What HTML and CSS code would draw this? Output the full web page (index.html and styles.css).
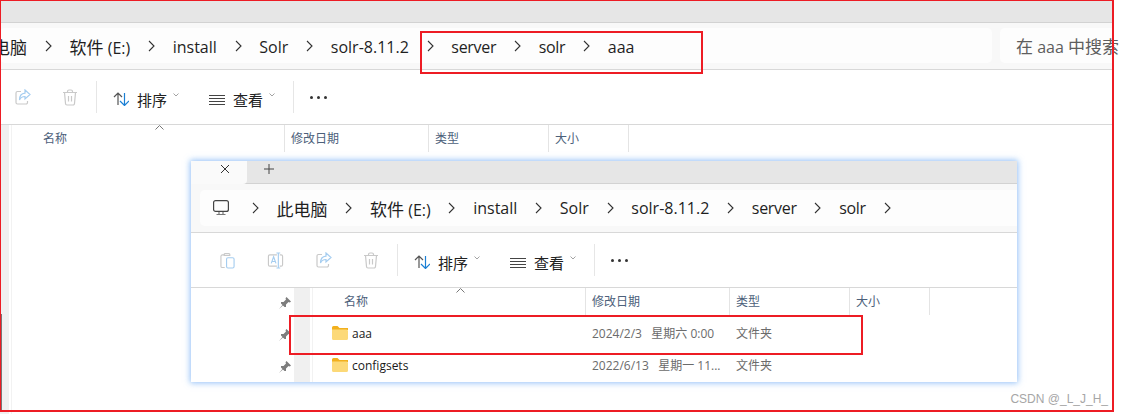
FILE: index.html
```html
<!DOCTYPE html>
<html lang="zh-CN">
<head>
    <meta charset="UTF-8">
    <link rel="stylesheet" href="styles.css">
    <title>aaa</title>
</head>
<body>
  <svg class="sprite" width="0" height="0">
    <symbol id="chev" viewBox="0 0 7 12"><path d="M1 1l5 5-5 5" fill="none" stroke="#333" stroke-width="1.1"/></symbol>
    <symbol id="clip" viewBox="0 0 16 18"><path d="M5 3H2.500A1.500 1.500 0 0 0 1 4.500V15a1.500 1.500 0 0 0 1.500 1.500H5" fill="none" stroke="#c9c9c9" stroke-width="1.2"/><path d="M4.500 3.500V2.500a1 1 0 0 1 1-1h4a1 1 0 0 1 1 1v1z" fill="none" stroke="#c9c9c9" stroke-width="1.200"/><rect x="7" y="6" width="8" height="11" rx="1.500" fill="none" stroke="#a5cdf0" stroke-width="1.200"/></symbol>
    <symbol id="trans" viewBox="0 0 17 18"><path d="M10 3H2.500A1.500 1.500 0 0 0 1 4.500v9A1.500 1.500 0 0 0 2.500 15H10M13 3h1.500A1.500 1.500 0 0 1 16 4.500v9a1.500 1.500 0 0 1-1.500 1.500H13" fill="none" stroke="#c9c9c9" stroke-width="1.200"/><path d="M4 12l2.500-7 2.500 7M5 10h3" fill="none" stroke="#a5cdf0" stroke-width="1.200"/><path d="M9.500 1h4M9.500 17h4M11.500 1v16" fill="none" stroke="#a5cdf0" stroke-width="1.200"/></symbol>
    <symbol id="share" viewBox="0 0 16 16"><path d="M6 2.500H2.500A1.500 1.500 0 0 0 1 4v9.500A1.500 1.500 0 0 0 2.500 15H11a1.500 1.500 0 0 0 1.500-1.500V12" fill="none" stroke="#c9c9c9" stroke-width="1.200"/><path d="M10 1l5 4.500L10 10V7.500C7.500 7.500 5.500 8.500 4.500 11c0-4 2-6.500 5.500-6.800z" fill="none" stroke="#a5cdf0" stroke-width="1.200"/></symbol>
    <symbol id="trash" viewBox="0 0 16 17"><path d="M1 3.500h14M5.500 3.500V2.500a1.500 1.500 0 0 1 1.500-1.500h2a1.500 1.500 0 0 1 1.500 1.500v1M2.500 3.500l1 11a1.500 1.500 0 0 0 1.500 1.500h6a1.500 1.500 0 0 0 1.500-1.500l1-11M6.500 7v5.500M9.500 7v5.500" fill="none" stroke="#c9c9c9" stroke-width="1.200"/></symbol>
    <symbol id="sort" viewBox="0 0 16 14"><path d="M1 5l4-4 4 4M5 1v12" fill="none" stroke="#555" stroke-width="1.200"/><path d="M7 9l4.500 4.500L16 9M11.500 13V1" fill="none" stroke="#1a7fd4" stroke-width="1.200"/></symbol>
    <symbol id="lines" viewBox="0 0 16 10"><path d="M0 .5h16M0 3.500h16M0 6.500h16M0 9.500h16" stroke="#444" stroke-width="1"/></symbol>
    <symbol id="caret" viewBox="0 0 6 4"><path d="M.5.500L3 3 5.500.500" fill="none" stroke="#999" stroke-width=".9"/></symbol>
    <symbol id="up" viewBox="0 0 9 5"><path d="M.5 4.500L4.500.500l4 4" fill="none" stroke="#777" stroke-width="1"/></symbol>
    <symbol id="folder" viewBox="0 0 16 14"><path d="M0 1.500A1.500 1.500 0 0 1 1.500 0h4l2 2H16v2H0z" fill="#f2b01e"/><path d="M0 3.500h14.500A1.500 1.500 0 0 1 16 5v7.500a1.500 1.500 0 0 1-1.500 1.500h-13A1.500 1.500 0 0 1 0 12.500z" fill="#fcd978"/></symbol>
    <symbol id="pin" viewBox="0 0 12 12"><path d="M7.500 0L12 4.500 10.800 5.500 9.500 5 7 7.500 7 10 5.500 10 2 6.500 2 5 4.500 5 7 2.500 6.500 1.200zM3.500 8L0 12l4-3.500z" fill="#7d7d7d"/></symbol>
  </svg>

  <!-- back window -->
  <div class="win back">
    <div class="tabs"></div>
    <div class="band">
      <div class="addr clip">
        <span class="crumb"><span class="zh">此电脑</span></span>
        <svg class="chev"><use href="#chev"/></svg>
        <span class="crumb"><span class="zh">软件</span> (E:)</span>
        <svg class="chev"><use href="#chev"/></svg>
        <span class="crumb">install</span>
        <svg class="chev"><use href="#chev"/></svg>
        <span class="crumb">Solr</span>
        <svg class="chev"><use href="#chev"/></svg>
        <span class="crumb">solr-8.11.2</span>
        <svg class="chev"><use href="#chev"/></svg>
        <span class="crumb tight">server</span>
        <svg class="chev"><use href="#chev"/></svg>
        <span class="crumb tight">solr</span>
        <svg class="chev"><use href="#chev"/></svg>
        <span class="crumb">aaa</span>
      </div>
      <div class="search"><span class="zh">在</span> aaa <span class="zh">中搜索</span></div>
    </div>
    <div class="tools">
      <svg class="ic i-share"><use href="#share"/></svg>
      <svg class="ic i-trash"><use href="#trash"/></svg>
      <div class="sep"></div>
      <svg class="i-sort"><use href="#sort"/></svg>
      <span class="tool-txt">排序</span>
      <svg class="caret"><use href="#caret"/></svg>
      <svg class="i-lines"><use href="#lines"/></svg>
      <span class="tool-txt">查看</span>
      <svg class="caret"><use href="#caret"/></svg>
      <div class="sep sep2"></div>
      <div class="dots"><i></i><i></i><i></i></div>
    </div>
    <div class="main">
      <div class="strip"></div>
      <div class="list">
        <div class="cols">
          <svg class="up"><use href="#up"/></svg>
          <div class="col c-name">名称</div>
          <div class="col c-date">修改日期</div>
          <div class="col c-type">类型</div>
          <div class="col c-size">大小</div>
        </div>
      </div>
    </div>
  </div>

  <!-- front window -->
  <div class="win front">
    <div class="tabs">
      <div class="tab">
        <svg class="x" width="10" height="10" viewBox="0 0 10 10"><path d="M1 1l8 8M9 1l-8 8" stroke="#333" stroke-width="1"/></svg>
      </div>
      <svg class="plus" width="10" height="10" viewBox="0 0 10 10"><path d="M5 0v10M0 5h10" stroke="#444" stroke-width="1"/></svg>
    </div>
    <div class="band">
      <div class="addr">
        <svg class="pc" width="16" height="16" viewBox="0 0 16 16"><rect x=".6" y=".6" width="14.800" height="10.800" rx="2" fill="none" stroke="#444" stroke-width="1.200"/><path d="M3.500 14.500h9M6 12v2.500M10 12v2.500" stroke="#777" stroke-width="1.200"/></svg>
        <svg class="chev"><use href="#chev"/></svg>
        <span class="crumb"><span class="zh">此电脑</span></span>
        <svg class="chev"><use href="#chev"/></svg>
        <span class="crumb"><span class="zh">软件</span> (E:)</span>
        <svg class="chev"><use href="#chev"/></svg>
        <span class="crumb">install</span>
        <svg class="chev"><use href="#chev"/></svg>
        <span class="crumb">Solr</span>
        <svg class="chev"><use href="#chev"/></svg>
        <span class="crumb">solr-8.11.2</span>
        <svg class="chev"><use href="#chev"/></svg>
        <span class="crumb tight">server</span>
        <svg class="chev"><use href="#chev"/></svg>
        <span class="crumb tight">solr</span>
        <svg class="chev"><use href="#chev"/></svg>
      </div>
    </div>
    <div class="tools">
      <svg class="ic i-clip"><use href="#clip"/></svg>
      <svg class="ic i-trans"><use href="#trans"/></svg>
      <svg class="ic i-share"><use href="#share"/></svg>
      <svg class="ic i-trash"><use href="#trash"/></svg>
      <div class="sep"></div>
      <svg class="i-sort"><use href="#sort"/></svg>
      <span class="tool-txt">排序</span>
      <svg class="caret"><use href="#caret"/></svg>
      <svg class="i-lines"><use href="#lines"/></svg>
      <span class="tool-txt">查看</span>
      <svg class="caret"><use href="#caret"/></svg>
      <div class="sep sep2"></div>
      <div class="dots"><i></i><i></i><i></i></div>
    </div>
    <div class="main">
      <div class="pins">
        <svg class="pin"><use href="#pin"/></svg>
        <svg class="pin"><use href="#pin"/></svg>
        <svg class="pin"><use href="#pin"/></svg>
      </div>
      <div class="strip"></div>
      <div class="list">
        <div class="cols">
          <svg class="up"><use href="#up"/></svg>
          <div class="col c-name">名称</div>
          <div class="col c-date">修改日期</div>
          <div class="col c-type">类型</div>
          <div class="col c-size">大小</div>
        </div>
        <div class="rows">
          <div class="row">
            <div class="r-name"><svg class="folder"><use href="#folder"/></svg>aaa</div>
            <div class="r-date">2024/2/3&nbsp;&nbsp;&nbsp;星期六 0:00</div>
            <div class="r-type">文件夹</div>
          </div>
          <div class="row">
            <div class="r-name"><svg class="folder"><use href="#folder"/></svg>configsets</div>
            <div class="r-date">2022/6/13&nbsp;&nbsp;&nbsp;星期一 11...</div>
            <div class="r-type">文件夹</div>
          </div>
        </div>
      </div>
    </div>
  </div>

  <!-- red marks drawn on top -->
  <div class="mark m-frame"></div>
  <div class="mark m-path"></div>
  <div class="mark m-row"></div>
  <div class="edge"></div>
  <div class="wm">CSDN @_L_J_H_</div>
</body>
</html>
```

FILE: styles.css
```css
html, body {
  margin: 0;
  height: 414px;
  overflow: hidden;
  background: #fff;
  font-family: "Open Sans", "Noto Sans CJK SC", sans-serif;
  color: #1f1f1f;
}
.sprite {
  position: absolute;
}
.zh {
  font-size: 17px;
}
.win {
  display: flex;
  flex-direction: column;
  background: #fff;
}
.back {
  width: 1113px;
  height: 414px;
}
.front {
  position: absolute;
  left: 191px;
  top: 161px;
  width: 826px;
  height: 221px;
  overflow: hidden;
  box-shadow: 0 0 6px 1px rgba(90, 160, 245, .65);
}

/* tab strip */
.tabs {
  display: flex;
  align-items: center;
  height: 22px;
  background: #e6e6e6;
  border-bottom: 1px solid #d2d2d2;
  flex: none;
}
.tab {
  display: flex;
  align-items: center;
  height: 23px;
  width: 56px;
  background: #fafafa;
  border-bottom-right-radius: 4px;
  margin-bottom: -1px;
  box-sizing: border-box;
  padding-left: 29px;
}
.x {
  margin-top: -8px;
}
.plus {
  margin-left: 17px;
  margin-top: -6px;
}

/* address */
.band {
  display: flex;
  gap: 8px;
  box-sizing: border-box;
  height: 47px;
  padding: 5px 0 6px;
  background: #f8f8f8;
  border-bottom: 1px solid #d8d8d8;
  flex: none;
}
.front .band {
  height: 49px;
  padding: 6px 0 6px 9px;
}
.addr {
  display: flex;
  align-items: center;
  gap: 17.75px;
  flex: 1;
  min-width: 0;
  overflow: hidden;
  background: #fdfdfd;
  border-radius: 5px;
  font-size: 16px;
  white-space: nowrap;
}
.crumb {
  margin-top: 2px;
}
.tight {
  letter-spacing: -.3px;
}
.addr.clip .crumb:first-child {
  margin-left: -24px;
}
.front .addr {
  border-radius: 5px 0 0 5px;
  padding-left: 13px;
}
.front .crumb {
  margin-top: 0;
}
.chev {
  width: 7px;
  height: 12px;
  flex: none;
}
.pc {
  flex: none;
  margin-right: 5px;
}
.search {
  width: 113px;
  box-sizing: border-box;
  padding-left: 16px;
  background: #fdfdfd;
  border-radius: 5px 0 0 5px;
  font-size: 16px;
  line-height: 37px;
  color: #5e5e5e;
  white-space: nowrap;
}

/* command bar */
.tools {
  display: flex;
  align-items: center;
  height: 55px;
  padding-left: 15px;
  box-sizing: border-box;
  border-bottom: 1px solid #d8d8d8;
  flex: none;
}
.front .tools {
  padding-left: 29px;
}
.ic {
  flex: none;
}
.i-clip {
  width: 15px;
  height: 17px;
  margin-right: 32px;
}
.i-trans {
  width: 17px;
  height: 17px;
  margin-right: 32px;
}
.i-share {
  width: 16px;
  height: 16px;
  margin-right: 31px;
}
.i-trash {
  width: 16px;
  height: 17px;
  margin-right: 18px;
}
.sep {
  width: 1px;
  height: 32px;
  background: #e6e6e6;
  margin-right: 16px;
}
.sep2 {
  margin-left: 18px;
}
.i-sort {
  width: 16px;
  height: 14px;
  margin-right: 8px;
  margin-top: 4px;
}
.tool-txt {
  font-size: 15px;
  color: #222;
  font-family: "Noto Sans CJK SC", sans-serif;
  margin-top: 4px;
}
.caret {
  width: 6px;
  height: 4px;
  margin-left: 6px;
  margin-top: -4px;
}
.i-lines {
  width: 16px;
  height: 10px;
  margin-left: 30px;
  margin-right: 8px;
  margin-top: 5px;
}
.dots {
  display: flex;
  gap: 4px;
}
.dots i {
  width: 3px;
  height: 3px;
  border-radius: 50%;
  background: #333;
}

/* file list */
.main {
  display: flex;
  flex: 1;
  min-height: 0;
}
.pins {
  width: 103px;
  box-sizing: border-box;
  padding: 9px 3px 0 0;
  display: flex;
  flex-direction: column;
  align-items: flex-end;
  gap: 20px;
  flex: none;
}
.pin {
  width: 12px;
  height: 12px;
}
.strip {
  width: 9px;
  background: #f0f0f0;
  flex: none;
}
.front .strip {
  width: 16px;
}
.list {
  position: relative;
  flex: 1;
  margin-left: 2px;
  border-left: 1px solid #f2f2f2;
}
.cols {
  display: flex;
  height: 27px;
  font-size: 12px;
  color: #4c607a;
}
.col {
  box-sizing: border-box;
  border-right: 1px solid #e4e4e4;
  padding-left: 6px;
  line-height: 28px;
}
.up {
  position: absolute;
  left: 143px;
  top: 0;
  width: 9px;
  height: 5px;
}
.c-name {
  width: 273px;
  padding-left: 31px;
}
.c-date {
  width: 144px;
}
.c-type {
  width: 120px;
}
.c-size {
  width: 80px;
}
.rows {
  padding-top: 2px;
}
.row {
  display: flex;
  align-items: center;
  height: 32px;
  font-size: 12px;
  color: #6b6b6b;
}
.r-name {
  display: flex;
  align-items: center;
  width: 279px;
  box-sizing: border-box;
  padding-left: 19px;
  color: #1a1a1a;
  flex: none;
}
.folder {
  width: 16px;
  height: 14px;
  margin-right: 4px;
}
.r-date {
  width: 144px;
  flex: none;
}

/* annotations */
.mark {
  position: absolute;
  box-sizing: border-box;
  border: 2px solid #ed1c24;
}
.m-frame {
  left: 0;
  top: 0;
  width: 1114px;
  height: 412px;
  border-width: 1px 2px 2px 1px;
}
.m-path {
  left: 420px;
  top: 31px;
  width: 283px;
  height: 43px;
}
.m-row {
  left: 289px;
  top: 315px;
  width: 574px;
  height: 40px;
}
.edge {
  position: absolute;
  left: 1px;
  top: 314px;
  width: 1px;
  height: 96px;
  background: #777;
}
.wm {
  position: absolute;
  right: 15px;
  top: 392px;
  font: 12px "Liberation Sans", sans-serif;
  color: #a6a6a6;
}
```
